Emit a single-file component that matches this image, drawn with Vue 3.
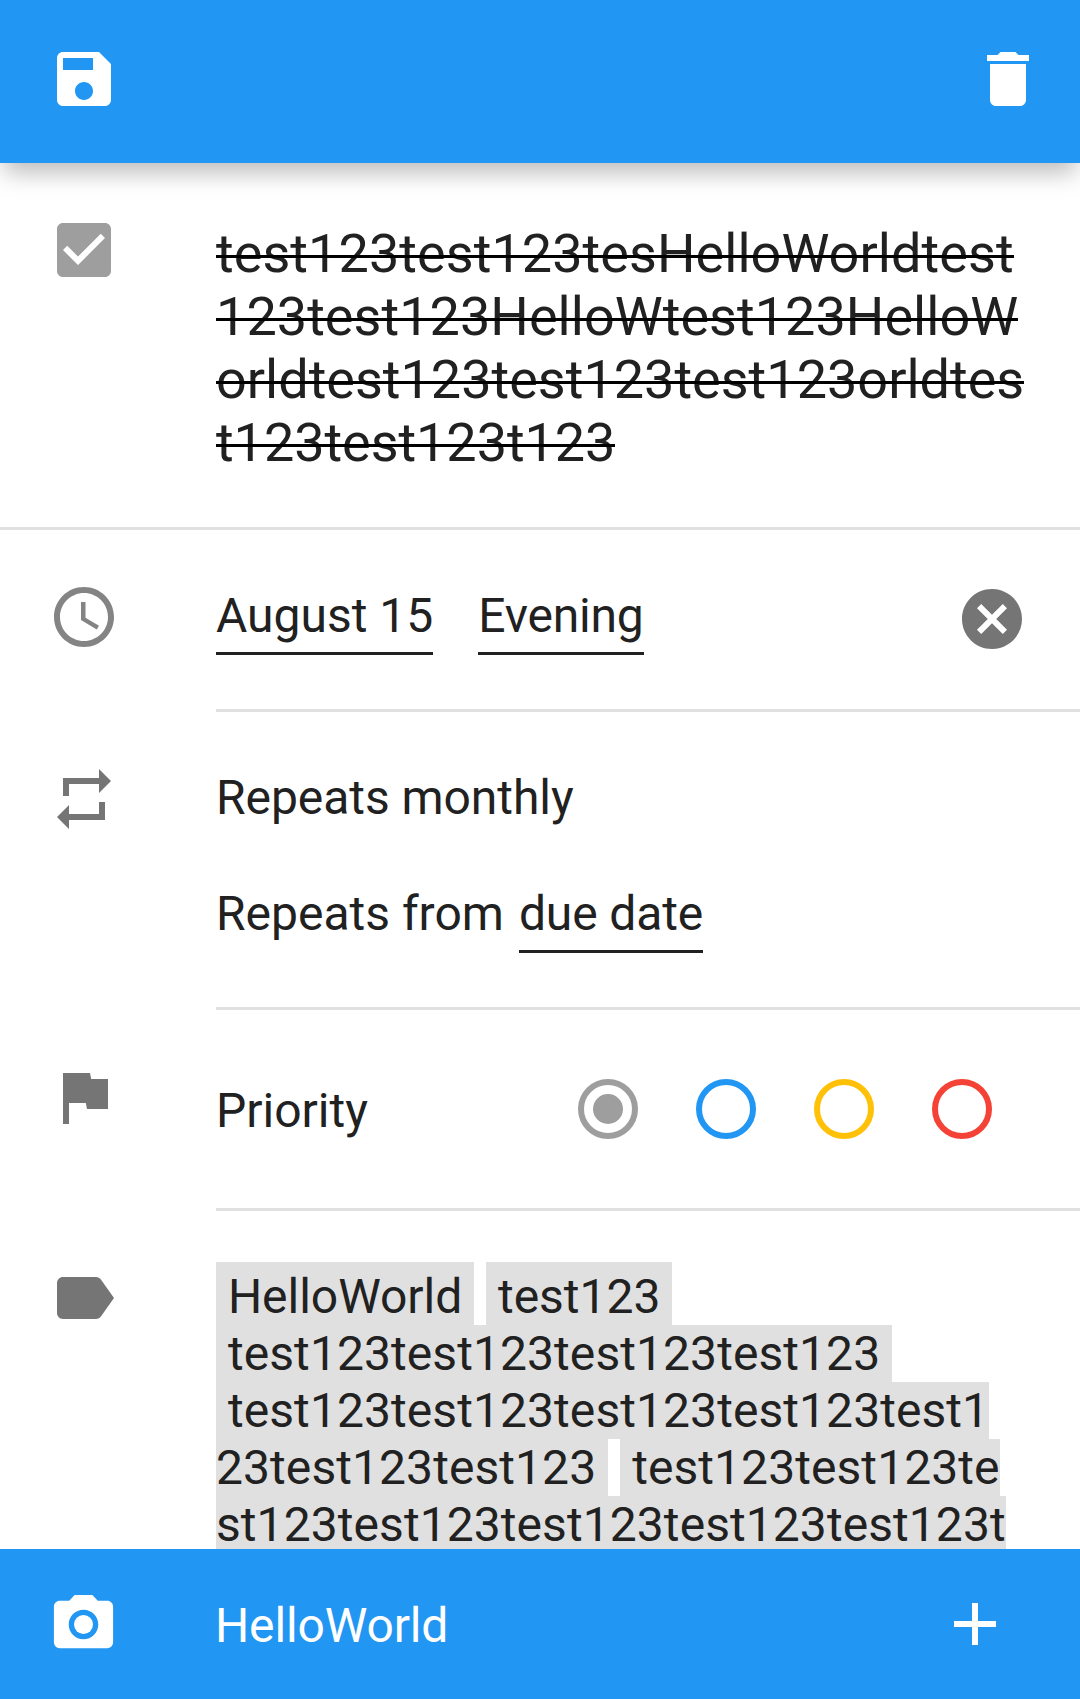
<script setup>
const titleLines = [
  { text: 'test123test123tesHelloWorldtest', spacing: 0.06 },
  { text: '123test123HelloWtest123HelloW', spacing: 0.04 },
  { text: 'orldtest123test123test123orldtes', spacing: 0 },
  { text: 't123test123t123', spacing: -0.06 },
]

const priorities = [
  { color: '#9e9e9e', checked: true },
  { color: '#2196f3', checked: false },
  { color: '#ffc107', checked: false },
  { color: '#f44336', checked: false },
]

const tagRows = [
  [' HelloWorld ', ' test123 '],
  [' test123test123test123test123 '],
  [' test123test123test123test123test1'],
  ['23test123test123 ', ' test123test123te'],
  ['st123test123test123test123test123t'],
]
</script>

<template>
  <div class="screen">
    <header class="toolbar">
      <svg class="icon" viewBox="0 0 24 24">
        <path fill-rule="evenodd" d="M17 3H5c-1.11 0-2 .9-2 2v14c0 1.1.89 2 2 2h14c1.1 0 2-.9 2-2V7l-4-4zm-5 16c-1.66 0-3-1.34-3-3s1.34-3 3-3 3 1.34 3 3-1.34 3-3 3zm3-10H5V5h10v4z" />
      </svg>
      <svg class="icon" viewBox="0 0 24 24">
        <path d="M6 19c0 1.1.9 2 2 2h8c1.1 0 2-.9 2-2V7H6v12zM19 4h-3.500l-1-1h-5l-1 1H5v2h14V4z" />
      </svg>
    </header>

    <main class="content">
      <section class="row title-row">
        <svg class="icon check" viewBox="0 0 24 24">
          <path d="M19 3H5c-1.11 0-2 .9-2 2v14c0 1.1.89 2 2 2h14c1.11 0 2-.9 2-2V5c0-1.1-.89-2-2-2zm-9 14l-5-5 1.410-1.410L10 14.170l7.590-7.590L19 8l-9 9z" />
        </svg>
        <div class="title">
          <div v-for="line in titleLines" :key="line.text" class="title-line" :style="{ letterSpacing: line.spacing + 'px' }">{{ line.text }}</div>
        </div>
      </section>

      <section class="row due-row">
        <svg class="icon clock" viewBox="0 0 24 24">
          <path d="M11.990 2C6.470 2 2 6.480 2 12s4.470 10 9.990 10C17.520 22 22 17.520 22 12S17.520 2 11.990 2zM12 20c-4.420 0-8-3.580-8-8s3.580-8 8-8 8 3.580 8 8-3.580 8-8 8z" />
          <path d="M12.500 7H11v6l5.250 3.150.750-1.230-4.500-2.670z" />
        </svg>
        <div class="body due">
          <span class="link">August 15</span>
          <span class="link evening">Evening</span>
          <svg class="icon clear" viewBox="0 0 24 24">
            <path d="M12 2C6.470 2 2 6.470 2 12s4.470 10 10 10 10-4.470 10-10S17.530 2 12 2zm5 13.590L15.590 17 12 13.410 8.410 17 7 15.590 10.590 12 7 8.410 8.410 7 12 10.590 15.590 7 17 8.410 13.410 12 17 15.590z" />
          </svg>
        </div>
      </section>

      <section class="row repeat-row">
        <svg class="icon" viewBox="0 0 24 24">
          <path d="M7 7h10v3l4-4-4-4v3H5v6h2V7zm10 10H7v-3l-4 4 4 4v-3h12v-6h-2v4z" />
        </svg>
        <div class="body repeat">
          <div class="repeat-label">Repeats monthly</div>
          <div class="repeat-from"><span>Repeats from</span><span class="link due-date">due date</span></div>
        </div>
      </section>

      <section class="row priority-row">
        <svg class="icon" viewBox="0 0 24 24">
          <path d="M14.400 6L14 4H5v17h2v-7h5.600l.4 2h7V6z" />
        </svg>
        <div class="body priority">
          <span class="label">Priority</span>
          <div class="radios">
            <svg v-for="p in priorities" :key="p.color" class="icon" viewBox="0 0 24 24">
              <circle cx="12" cy="12" r="9" fill="none" :stroke="p.color" stroke-width="2" />
              <circle v-if="p.checked" cx="12" cy="12" r="5" :fill="p.color" />
            </svg>
          </div>
        </div>
      </section>

      <section class="row tags-row">
        <svg class="icon" viewBox="0 0 24 24">
          <path d="M17.630 5.840C17.270 5.330 16.670 5 16 5L5 5.010C3.900 5.010 3 5.900 3 7v10c0 1.100.9 1.990 2 1.990L16 19c.670 0 1.270-.330 1.630-.840L22 12l-4.370-6.160z" />
        </svg>
        <div class="tags">
          <div v-for="(row, i) in tagRows" :key="i" class="tag-line">
            <span v-for="tag in row" :key="tag" class="tag">{{ tag }}</span>
          </div>
        </div>
      </section>
    </main>

    <footer class="bottom-bar">
      <svg class="icon camera" viewBox="0 0 24 24">
        <circle cx="12" cy="12" r="3.200" />
        <path d="M9 2L7.170 4H4c-1.100 0-2 .9-2 2v12c0 1.100.9 2 2 2h16c1.100 0 2-.9 2-2V6c0-1.100-.9-2-2-2h-3.170L15 2H9zm3 15c-2.760 0-5-2.240-5-5s2.240-5 5-5 5 2.240 5 5-2.240 5-5 5z" />
      </svg>
      <span class="bottom-text">HelloWorld</span>
      <svg class="icon" viewBox="0 0 24 24">
        <path d="M19 13h-6v6h-2v-6H5v-2h6V5h2v6h6v2z" />
      </svg>
    </footer>
  </div>
</template>

<style>
body {
  margin: 0;
}
</style>

<style scoped>
.screen {
  display: flex;
  flex-direction: column;
  width: 1080px;
  height: 1699px;
  overflow: hidden;
  background: #fff;
  color: #212121;
  font: 48px/57px Roboto, sans-serif;
}
.icon {
  display: block;
  flex: none;
  width: 72px;
  height: 72px;
  fill: #757575;
}
.toolbar {
  position: relative;
  z-index: 1;
  display: flex;
  flex: none;
  justify-content: space-between;
  box-sizing: border-box;
  height: 163px;
  padding: 43px 36px 0 48px;
  background: #2196f3;
  box-shadow: 0 14px 22px -4px rgba(0, 0, 0, 0.26);
}
.toolbar .icon,
.bottom-bar .icon {
  fill: #fff;
}
.content {
  flex: 1;
  min-height: 0;
  overflow: hidden;
}
.row {
  display: flex;
  box-sizing: border-box;
  padding-left: 48px;
}
.row > .icon {
  margin-right: 96px;
}
.body {
  flex: 1;
  box-sizing: border-box;
  border-bottom: 3px solid #e0e0e0;
}
.title-row {
  height: 367px;
  padding-top: 51px;
  border-bottom: 3px solid #e0e0e0;
}
.icon.check {
  fill: #9e9e9e;
}
.title {
  display: flex;
  flex-direction: column;
  align-items: flex-start;
  padding-top: 8px;
  font-size: 54px;
  line-height: 63px;
}
.title-line {
  position: relative;
  height: 63px;
  white-space: nowrap;
}
/* strike bar over the finished task's title */
.title-line::after {
  content: '';
  position: absolute;
  top: 33px;
  left: 0;
  right: 0;
  height: 3px;
  background: #000;
}
.link {
  height: 65px;
  border-bottom: 3px solid #212121;
  white-space: nowrap;
}
.evening {
  letter-spacing: -0.2px;
}
.due-date {
  letter-spacing: -0.13px;
}
.due-row {
  height: 182px;
}
.icon.clock {
  margin-top: 51px;
  fill: #848484;
}
.due {
  display: flex;
  align-items: flex-start;
  gap: 45px;
  padding: 57px 52px 0 0;
}
.icon.clear {
  margin: -4px 0 0 auto;
}
.repeat-row {
  height: 298px;
}
.repeat-row > .icon {
  margin-top: 51px;
}
.repeat {
  padding-top: 57px;
}
.repeat-label {
  letter-spacing: -0.06px;
}
.repeat-from {
  display: flex;
  gap: 15px;
  margin-top: 59px;
}
.priority-row {
  height: 201px;
}
.priority-row > .icon {
  margin-top: 51px;
}
.priority {
  display: flex;
  align-items: flex-start;
  justify-content: space-between;
  padding: 63px 82px 0 0;
}
.label {
  margin-top: 9px;
}
.radios {
  display: flex;
  gap: 46px;
}
.tags-row {
  padding-top: 51px;
}
.tag-line {
  display: flex;
  gap: 12px;
  height: 57px;
  letter-spacing: 0.07px;
}
.tag {
  background: #e0e0e0;
  white-space: pre;
}
.tag-line:first-child {
  height: 63px;
  letter-spacing: -0.03px;
}
.tag-line:first-child .tag {
  padding-top: 6px;
}
.bottom-bar {
  display: flex;
  flex: none;
  align-items: center;
  box-sizing: border-box;
  height: 150px;
  padding: 0 69px 0 48px;
  background: #2196f3;
  color: #fff;
}
.icon.camera {
  width: 71px;
  height: 71px;
}
.bottom-text {
  flex: 1;
  margin: 3px 0 0 96px;
  letter-spacing: -0.14px;
}
</style>
